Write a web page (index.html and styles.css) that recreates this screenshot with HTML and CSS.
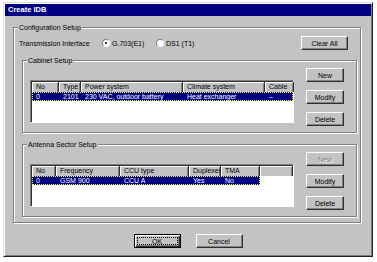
FILE: index.html
```html
<!DOCTYPE html>
<html lang="en">
<head>
    <meta charset="UTF-8">
    <title>Create IDB</title>
    <link rel="stylesheet" href="styles.css">
</head>
<body>

    <div class="window">
        <div class="titlebar">Create IDB</div>

        <div class="group config">
            <span class="legend">Configuration Setup</span>

            <div class="trans-row">
                <span class="trans-label">Transmission Interface</span>
                <span class="option opt-first"><span class="radio on"></span>G.703(E1)</span>
                <span class="option"><span class="radio"></span>DS1 (T1)</span>
                <button class="btn clear-btn">Clear All</button>
            </div>

            <div class="group sub">
                <span class="legend">Cabinet Setup</span>
                <div class="list">
                    <div class="row head cab-cols">
                        <span>No</span><span>Type</span><span>Power system</span><span>Climate system</span><span>Cable</span>
                    </div>
                    <div class="row sel cab-cols">
                        <span>0</span><span>2101</span><span>230 VAC, outdoor battery</span><span>Heat exchanger</span><span>–</span>
                    </div>
                </div>
                <div class="buttons">
                    <button class="btn">New</button>
                    <button class="btn">Modify</button>
                    <button class="btn">Delete</button>
                </div>
            </div>

            <div class="group sub antenna">
                <span class="legend">Antenna Sector Setup</span>
                <div class="list">
                    <div class="row head ant-cols">
                        <span>No</span><span>Frequency</span><span>CCU type</span><span>Duplexer</span><span>TMA</span><span></span>
                    </div>
                    <div class="row ant-cols">
                        <span class="sel-part">
                            <span>0</span><span>GSM 900</span><span>CCU A</span><span>Yes</span><span>No</span>
                        </span>
                    </div>
                </div>
                <div class="buttons">
                    <button class="btn disabled">New</button>
                    <button class="btn">Modify</button>
                    <button class="btn">Delete</button>
                </div>
            </div>
        </div>

        <div class="footer">
            <button class="btn default"><span class="focus">OK</span></button>
            <button class="btn">Cancel</button>
        </div>
    </div>

</body>
</html>
```

FILE: styles.css
```css
body {
    margin: 0;
    background: #ffffff;
    font-family: 'Liberation Sans', Arial, sans-serif;
    font-size: 7px;
    color: #000;
}

.window {
    margin: 2px 0 0 3px;
    width: 370px;
    height: 255px;
    box-sizing: border-box;
    background: #c3c3c3;
    border: 1px solid;
    border-color: #dcdcdc #202020 #202020 #dcdcdc;
    box-shadow: inset 1px 1px 0 #fff, inset -1px -1px 0 #808080;
    padding: 1px;
}

.titlebar {
    height: 12px;
    line-height: 12px;
    background: #000080;
    color: #fff;
    font-weight: bold;
    font-size: 7.5px;
    padding-left: 3px;
}

.group {
    position: relative;
    border: 1px solid #808080;
    box-shadow: inset 1px 1px 0 #fff, 1px 1px 0 #fff;
}

.legend {
    position: absolute;
    top: -5px;
    left: 4px;
    padding: 0 1px;
    background: #c3c3c3;
    line-height: 9px;
}

.config {
    margin: 11px 0 0 8px;
    width: 348px;
    height: 196px;
    box-sizing: border-box;
    padding: 8px 3px 0 8px;
}

.trans-row {
    display: flex;
    align-items: center;
    height: 14px;
    margin-left: -3px;
    padding-right: 9px;
}

.trans-label {
    width: 83px;
}

.option {
    display: flex;
    align-items: center;
    gap: 2px;
}

.opt-first {
    width: 54px;
}

.radio {
    position: relative;
    width: 6px;
    height: 6px;
    border-radius: 50%;
    background: #fff;
    border: 1px solid;
    border-color: #808080 #fff #fff #808080;
}

.radio.on::after {
    content: "";
    position: absolute;
    left: 2px;
    top: 2px;
    width: 2px;
    height: 2px;
    border-radius: 50%;
    background: #000;
}

.btn {
    width: 38px;
    height: 14px;
    padding: 0;
    background: #c3c3c3;
    font-family: inherit;
    font-size: 7px;
    color: #000;
    border: 1px solid;
    border-color: #fff #303030 #303030 #fff;
    box-shadow: inset -1px -1px 0 #808080;
}

.clear-btn {
    width: 47px;
    margin-left: auto;
}

.sub {
    display: flex;
    width: 335px;
    height: 73px;
    box-sizing: border-box;
    margin-top: 10px;
    padding: 0 12px 0 7px;
}

.antenna {
    margin-top: 11px;
}

.list {
    width: 264px;
    height: 43px;
    margin-top: 19px;
    box-sizing: border-box;
    background: #fff;
    border: 1px solid;
    border-color: #808080 #fff #fff #808080;
    box-shadow: inset 1px 1px 0 #303030;
    padding: 1px 0 0 1px;
}

.row {
    display: grid;
    height: 9px;
    line-height: 9px;
}

.row span {
    padding-left: 4px;
    white-space: nowrap;
    overflow: hidden;
}

.head {
    height: 10px;
    line-height: 10px;
}

.head span {
    background: #c3c3c3;
    box-sizing: border-box;
    border-right: 1px solid #303030;
    box-shadow: inset 1px 1px 0 #fff, inset -1px 0 0 #808080;
}

.cab-cols {
    grid-template-columns: 27px 22px 102px 82px 29px;
}

.ant-cols {
    grid-template-columns: 228px 33px;
}

.ant-cols.head {
    grid-template-columns: 24px 64px 69px 32px 39px 33px;
}

.sel,
.sel-part {
    background: #000080;
    color: #fff;
    outline: 1px dotted #ffff00;
    outline-offset: -1px;
}

.sel-part {
    display: grid;
    grid-template-columns: 24px 64px 69px 32px 39px;
    padding-left: 0 !important;
}

.buttons {
    display: flex;
    flex-direction: column;
    gap: 8px;
    margin: 7px 0 0 auto;
}

.disabled {
    color: #808080;
    text-shadow: 1px 1px 0 #fff;
}

.footer {
    display: flex;
    justify-content: center;
    gap: 15px;
    margin-top: 11px;
}

.footer .btn {
    width: 47px;
}

.default {
    border: 1px solid #000;
    box-shadow: inset 1px 1px 0 #fff, inset -1px -1px 0 #303030, inset -2px -2px 0 #808080;
    padding: 2px;
}

.focus {
    display: block;
    height: 100%;
    box-sizing: border-box;
    border: 1px dotted #000;
    line-height: 8px;
}
```
